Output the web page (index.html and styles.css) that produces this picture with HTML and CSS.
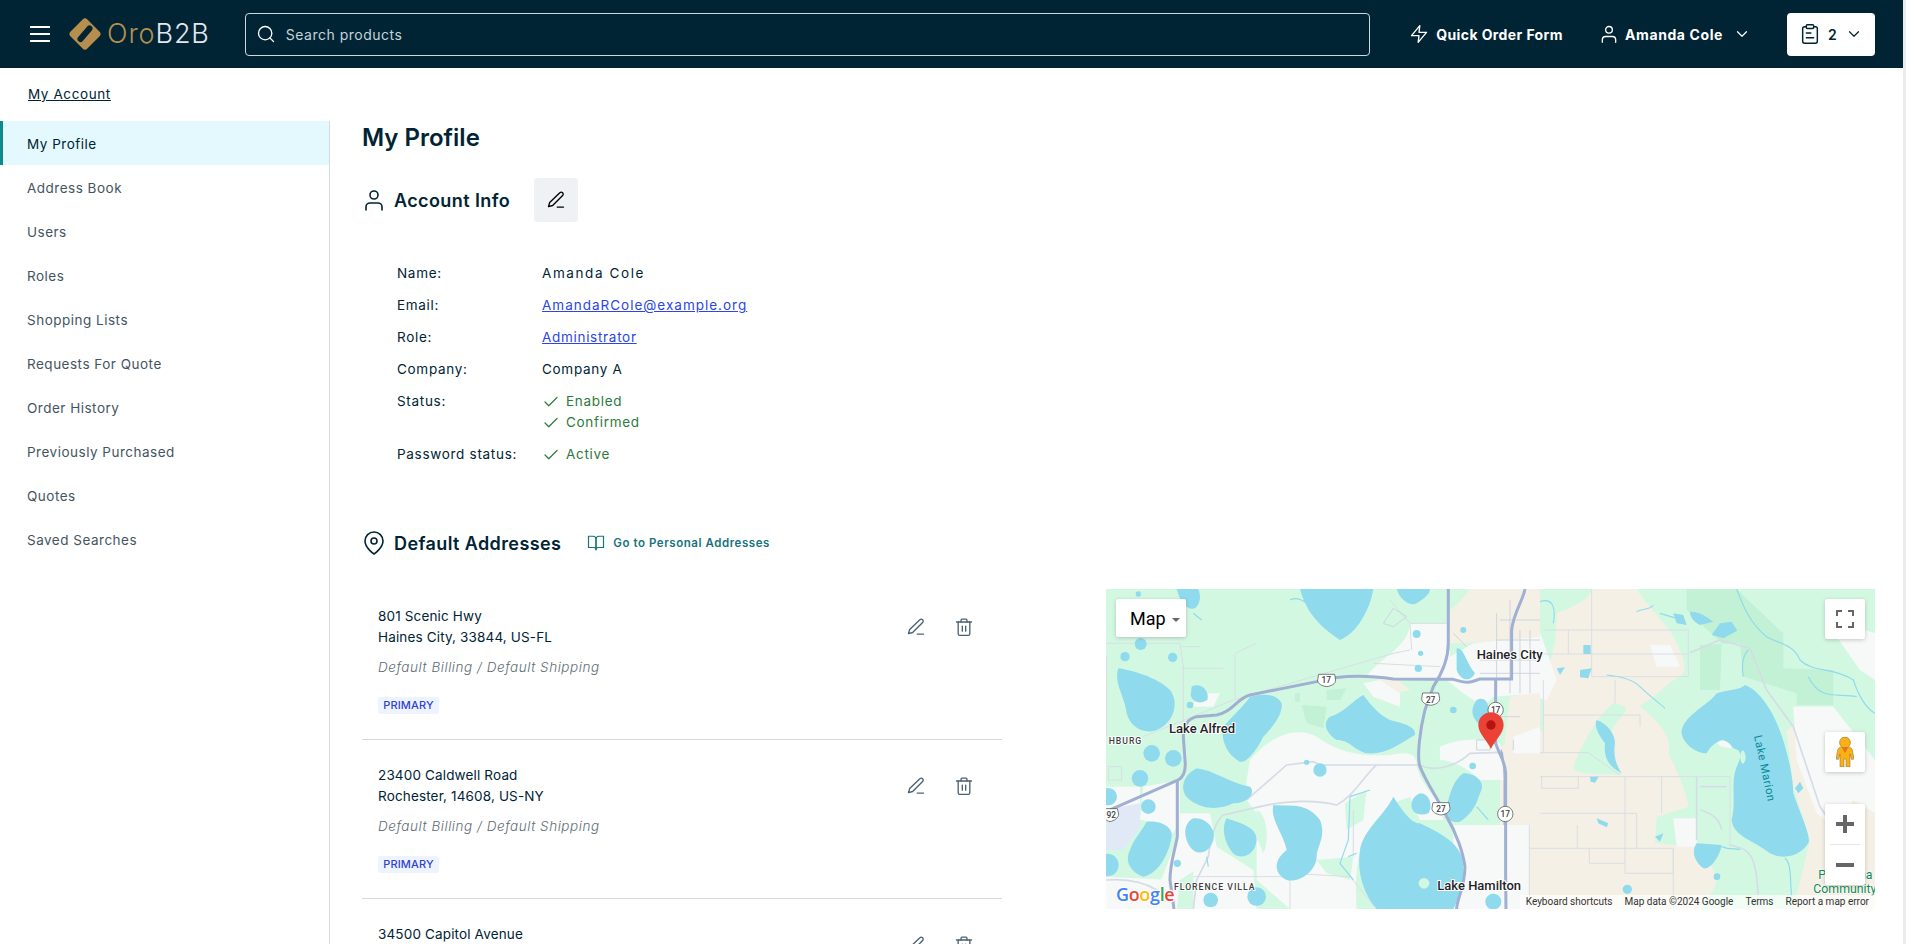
FILE: index.html
```html
<!DOCTYPE html>
<html lang="en">
<head>
  <meta charset="UTF-8">
  <meta name="viewport" content="width=device-width, initial-scale=1.0">
  <title>My Profile</title>
  <link rel="stylesheet" href="styles.css">
</head>
<body>
  <svg class="sprite" width="0" height="0">
    <symbol id="i-user" viewBox="0 0 24 24"><circle cx="12" cy="7" r="4"/><path d="M4 22v-3a4 4 0 0 1 4-4h8a4 4 0 0 1 4 4v3"/></symbol>
    <symbol id="i-edit" viewBox="0 0 24 24"><path d="M16.600 3.400a2.300 2.300 0 0 1 3.300 3.300L8 18.600l-5 1.400 1.400-5z"/><path d="M13.500 20.500H21"/></symbol>
    <symbol id="i-trash" viewBox="0 0 24 24"><path d="M3 6h18"/><path d="M8.500 6V3.500a1 1 0 0 1 1-1h5a1 1 0 0 1 1 1V6"/><path d="M19 6v14a2 2 0 0 1-2 2H7a2 2 0 0 1-2-2V6"/><path d="M10 11v6"/><path d="M14 11v6"/></symbol>
    <symbol id="i-clip" viewBox="0 0 24 24"><path d="M16 4h2a2 2 0 0 1 2 2v14a2 2 0 0 1-2 2H6a2 2 0 0 1-2-2V6a2 2 0 0 1 2-2h2"/><rect x="8" y="2" width="8" height="4" rx="1"/><path d="M8 11h5"/><path d="M8 16h8"/></symbol>
    <symbol id="i-bolt" viewBox="0 0 24 24"><path d="M13 2 3 14h9l-1 8 10-12h-9z"/></symbol>
    <symbol id="i-search" viewBox="0 0 24 24"><circle cx="11" cy="11" r="8"/><path d="M21 21l-4.350-4.350"/></symbol>
    <symbol id="i-check" viewBox="0 0 24 24"><path d="M20 6 9 17l-5-5"/></symbol>
    <symbol id="i-pin" viewBox="0 0 24 24"><path d="M21 10c0 7-9 13-9 13s-9-6-9-13a9 9 0 0 1 18 0z"/><circle cx="12" cy="10" r="3"/></symbol>
    <symbol id="i-book" viewBox="0 0 24 24"><path d="M2 3h6a4 4 0 0 1 4 4v14a3 3 0 0 0-3-3H2z"/><path d="M22 3h-6a4 4 0 0 0-4 4v14a3 3 0 0 1 3-3h7z"/></symbol>
    <symbol id="i-down" viewBox="0 0 24 24"><path d="M6 9l6 6 6-6"/></symbol>
  </svg>

  <div class="page">
    <div class="content">
      <header class="topbar">
        <button class="burger" aria-label="Menu"><span></span><span></span><span></span></button>
        <a class="logo" href="#">
          <svg class="logo-mark" viewBox="0 0 32 32">
            <path class="logo-gold" d="M13.600 1.600a3.300 3.300 0 0 1 4.800 0l12 12a3.300 3.300 0 0 1 0 4.800l-12 12a3.300 3.300 0 0 1-4.800 0l-12-12a3.300 3.300 0 0 1 0-4.800z"/>
            <path class="logo-slot" d="M11.500 21 20.500 10.500"/>
          </svg>
          <span class="logo-text"><span class="logo-oro">Oro</span>B2B</span>
        </a>
        <label class="search">
          <svg class="icon icon-search"><use href="#i-search"/></svg>
          <span class="search-text">Search products</span>
        </label>
        <a class="top-link quick" href="#"><svg class="icon"><use href="#i-bolt"/></svg>Quick Order Form</a>
        <a class="top-link account" href="#"><svg class="icon"><use href="#i-user"/></svg>Amanda Cole<svg class="icon chev"><use href="#i-down"/></svg></a>
        <button class="cart"><svg class="icon"><use href="#i-clip"/></svg><span>2</span><svg class="icon chev"><use href="#i-down"/></svg></button>
      </header>

      <div class="crumbs"><a href="#">My Account</a></div>

      <div class="layout">
        <nav class="sidebar">
          <a class="active" href="#">My Profile</a>
          <a href="#">Address Book</a>
          <a href="#">Users</a>
          <a href="#">Roles</a>
          <a href="#">Shopping Lists</a>
          <a href="#">Requests For Quote</a>
          <a href="#">Order History</a>
          <a href="#">Previously Purchased</a>
          <a href="#">Quotes</a>
          <a href="#">Saved Searches</a>
        </nav>

        <main class="main">
          <h1>My Profile</h1>

          <div class="section-head account-head">
            <svg class="icon head-icon"><use href="#i-user"/></svg>
            <h2>Account Info</h2>
            <button class="edit-btn"><svg class="icon"><use href="#i-edit"/></svg></button>
          </div>

          <dl class="info">
            <dt>Name:</dt><dd class="info-name">Amanda Cole</dd>
            <dt>Email:</dt><dd class="info-email"><a href="#">AmandaRCole@example.org</a></dd>
            <dt>Role:</dt><dd><a href="#">Administrator</a></dd>
            <dt>Company:</dt><dd>Company A</dd>
            <dt>Status:</dt>
            <dd>
              <div class="ok"><svg class="icon"><use href="#i-check"/></svg>Enabled</div>
              <div class="ok"><svg class="icon"><use href="#i-check"/></svg>Confirmed</div>
            </dd>
            <dt>Password status:</dt><dd><div class="ok"><svg class="icon"><use href="#i-check"/></svg>Active</div></dd>
          </dl>

          <div class="section-head address-head">
            <svg class="icon head-icon"><use href="#i-pin"/></svg>
            <h2>Default Addresses</h2>
            <a class="go-link" href="#"><svg class="icon"><use href="#i-book"/></svg>Go to Personal Addresses</a>
          </div>

          <div class="addresses">
            <div class="address-list">
              <div class="address">
                <div>
                  <div>801 Scenic Hwy</div>
                  <div>Haines City, 33844, US-FL</div>
                  <div class="address-type">Default Billing / Default Shipping</div>
                  <span class="badge">PRIMARY</span>
                </div>
                <div class="actions">
                  <button><svg class="icon"><use href="#i-edit"/></svg></button>
                  <button><svg class="icon"><use href="#i-trash"/></svg></button>
                </div>
              </div>
              <div class="address">
                <div>
                  <div>23400 Caldwell Road</div>
                  <div>Rochester, 14608, US-NY</div>
                  <div class="address-type">Default Billing / Default Shipping</div>
                  <span class="badge">PRIMARY</span>
                </div>
                <div class="actions">
                  <button><svg class="icon"><use href="#i-edit"/></svg></button>
                  <button><svg class="icon"><use href="#i-trash"/></svg></button>
                </div>
              </div>
              <div class="address">
                <div>
                  <div>34500 Capitol Avenue</div>
                </div>
                <div class="actions">
                  <button><svg class="icon"><use href="#i-edit"/></svg></button>
                  <button><svg class="icon"><use href="#i-trash"/></svg></button>
                </div>
              </div>
            </div>

            <div class="map">
              <svg class="map-art" viewBox="0 0 769 320">
                <rect width="769" height="320" fill="#d3f8e2"/>

                <!-- east half, traced from the crop -->
                <g transform="translate(394,-9) scale(.3333)">
                  <path class="land-dark" d="M560,27H710L850,160V265L1000,270V375H890V340L730,290L720,190L600,195V330H660L665,190L560,90Z"/>
                  <path class="beige" d="M275,27L410,27C440,80 520,150 530,190C565,260 560,285 520,300C490,320 470,350 418,378C470,420 520,470 505,520C530,570 560,640 565,680L470,710L465,790L580,800C640,840 660,900 640,930L600,987L0,987L0,500L130,450L130,280C170,230 170,130 170,100C220,80 270,60 275,27Z"/>
                  <path class="land" d="M340,370C300,400 250,480 220,560C225,585 260,580 365,585C330,540 320,480 340,440C380,390 400,380 340,370Z"/>
                  <path class="beige" d="M860,450L900,430L1000,600L1125,640V987H880L930,780L880,620Z"/>
                  <path class="white" d="M880,380H1000L1125,540V700L1060,660L1000,740L950,700L890,540Z"/>
                  <path class="white" d="M1010,170L1060,140L1125,160V300L1080,270Z"/>
                  <path class="white" d="M450,195H510L540,260H470Z"/>
                  <path class="white" d="M520,715H590V800H530Z"/>
                  <rect class="white" x="0" y="735" width="88" height="252"/>
                  <path class="white" d="M0,27H100V100L170,300L140,360L60,340L0,300Z"/>
                  <path class="grid" d="M130,150H565V290H275V27M130,222H565M205,150V222M20,590H690V800M125,590V625H235V590M375,590V880M485,590V700M88,520V987M88,700H410V805M88,805H520V880H375M232,735V805M268,805V850H375M520,805V987M0,518H265L360,585M130,405H420V440M345,300V370M130,300V520"/>
                  <path class="grid-road" d="M570,218L660,180L750,205L800,330L880,440L960,680L1000,740M590,590V780M600,620H680M600,690C640,700 660,720 665,750M690,795C740,810 775,800 775,987"/>
                  <path class="water" d="M735,315C780,330 820,400 835,440C860,500 880,590 880,640C900,700 935,770 925,790C900,830 850,840 810,820C760,780 700,770 695,720C710,660 690,610 710,560C730,520 720,510 700,505C680,470 640,480 620,520C580,520 540,480 545,450C560,400 620,380 650,340C680,330 720,330 735,315Z"/>
                  <path class="white" d="M650,490C665,470 690,485 695,505L665,500Z"/>
                  <path class="land" d="M728,510C740,520 740,545 728,552C718,540 718,520 728,510Z"/>
                  <path class="water" d="M290,420C320,430 345,460 345,490C340,520 345,550 365,580C330,560 310,540 315,490C300,470 280,440 290,420Z"/>
                  <path class="water" d="M590,790L665,795C660,830 630,870 610,865C590,850 570,820 590,790Z"/>
                  <path class="water" d="M660,130L695,125L712,152L670,175L635,165Z"/>
                  <path class="water" d="M570,95C600,95 620,110 640,125L600,135C580,125 570,110 570,95Z"/>
                  <path class="water" d="M520,100L550,105L560,135L530,130Z"/>
                  <path class="water" d="M900,605L910,625L895,640L885,625Z"/>
                  <path class="water" d="M250,195H272V222H250Z"/>
                  <path class="water" d="M240,270L275,265L265,295L240,292Z"/>
                  <path class="water" d="M170,265L195,262L180,285Z"/>
                  <circle class="water" cx="651" cy="890" r="10"/>
                  <circle class="water" cx="382" cy="928" r="14"/>
                  <path class="water" d="M290,715L325,730L320,742L295,730Z"/>
                  <path class="water" d="M465,770L490,760L480,785Z"/>
                  <path class="water" d="M270,590L296,590L285,608L272,605Z"/>
                  <path class="stream" d="M120,65C150,55 170,70 160,130M410,95C430,85 450,90 460,75M480,100L530,115M730,290C725,260 725,230 745,210M710,27C730,80 750,130 800,170C830,190 880,190 900,240C940,280 1000,260 1060,300C1080,360 1100,385 1125,400M925,290C960,360 1000,340 1070,350M320,285C370,290 400,300 420,320C450,350 480,370 495,385M855,835C875,850 870,900 875,950M665,800C690,810 700,805 720,808"/>
                  <path class="road-main" d="M75,27C60,60 35,110 35,160L35,297L0,297"/>
                  <path class="road-main" d="M0,510C15,540 15,560 15,600L15,987"/>
                  <text class="lake-label" transform="translate(762,468) rotate(78)">Lake Marion</text>
                  <text class="park-label" x="955" y="898">Poinciana</text>
                  <text class="park-label" x="940" y="940">Community</text>
                </g>

                <!-- west half -->
                <g transform="translate(-6,-9) scale(.3333)">
                  <path class="beige" d="M1050,90C1080,70 1100,40 1110,27L1320,27V180L1050,190Z"/>
                  <path class="beige" d="M1230,350L1320,330V735H1222L1210,520Z"/>
                  <path class="beige" d="M830,300L880,290L930,330L880,340Z"/>
                  <path class="white" d="M930,130L1050,130L1050,230L1120,190L1320,170V340L1180,350L1150,380L1090,340L1040,300L880,300L800,290C830,240 930,200 930,130Z"/>
                  <path class="white" d="M1240,470L1320,440V520L1240,520Z"/>
                  <path class="white" d="M450,540C520,460 590,440 650,470C720,520 790,530 870,525C940,510 950,530 950,560C960,600 1000,650 1010,660C950,640 900,650 860,690C780,750 760,860 770,987L570,987L470,900L470,700L440,660L440,600Z"/>
                  <path class="land-dark" d="M605,375L680,380L670,445L620,430ZM585,340H600V365H585ZM680,330L740,325L720,360L680,360Z"/>
                  <path class="land" d="M470,690C500,700 510,780 490,820L465,760Z"/>
                  <path class="land" d="M650,840L760,830L750,900L680,880Z"/>
                  <path class="land" d="M735,670L800,630L790,720L740,750Z"/>
                  <path class="white" d="M18,620H120V700L18,720Z"/>
                  <path class="white" d="M130,620L240,600V720L220,760C180,730 130,720 120,720Z"/>
                  <path class="white" d="M240,700L330,700L350,800L300,860L240,900L230,987H150L230,780Z"/>
                  <path class="white" d="M18,890L215,900V987H18Z"/>
                  <path class="white" d="M280,850L350,800L460,870L470,987H280Z"/>
                  <path class="white" d="M1060,735H1225V987H1060Z"/>
                  <path class="white" d="M1020,500C1060,480 1130,470 1200,490L1210,600L1140,600C1100,560 1050,540 1020,540Z"/>
                  <path class="white" d="M790,310L840,300L900,340L900,380L820,350Z"/>
                  <path class="white" d="M930,650L1010,650L1030,720L960,720Z"/>
                  <path class="white" d="M290,340L360,340L340,380L280,380Z"/>
                  <path class="lavender" d="M18,690L120,670V740L70,810H18Z"/>
                  <path class="grid" d="M18,190H240L250,260V470M20,230V470M245,265H370M245,200H300M405,220L470,190M405,225V355M870,60L930,130L935,210M930,130H1040M930,210L880,220L400,360L130,470M820,250L1020,260M25,560H65V600H25ZM280,890H570V987M570,880L750,890L830,987M760,690L760,830"/>
                  <path class="grid-road" d="M960,555C1000,575 1060,565 1110,520L1200,517M960,555H660L640,545L560,555L440,660M830,555C790,590 760,650 710,675C650,660 560,660 480,680L370,705C340,730 330,790 325,830L290,900L280,987M18,900C80,895 130,905 170,930L215,945"/>
                  <path class="building" d="M1060,160L1100,200M1140,240L1320,240M1190,100V340M1230,60L1230,340M1260,150V340M1290,150V340M1140,280H1320M1200,120H1320M1190,180H1320"/>
                  <path class="building" d="M850,130L880,85L920,110L880,140ZM1130,480H1170V510H1130ZM1200,410H1260M1240,480V510"/>
                  <path class="water" d="M600,27C620,100 660,140 720,180C770,160 810,90 820,27Z"/>
                  <path class="water" d="M230,27C240,70 270,100 290,80C305,60 300,40 295,27Z"/>
                  <path class="water" d="M890,27C900,60 930,80 950,70C980,50 990,40 990,27Z"/>
                  <path class="water" d="M55,265C90,270 170,290 210,330C240,370 220,430 170,450C130,465 90,440 80,400C75,350 40,310 55,265Z"/>
                  <path class="water" d="M275,320C300,305 330,330 322,360C300,375 275,365 272,345Z"/>
                  <path class="water" d="M450,350C490,340 530,340 545,370C550,400 520,440 490,470C470,510 440,550 420,545C390,530 360,490 370,440C385,420 430,380 450,350Z"/>
                  <path class="water" d="M790,345C810,370 830,400 870,420C910,430 950,440 945,465C900,490 860,525 800,520C760,510 750,480 710,480C680,460 665,430 690,410C730,400 760,360 790,345Z"/>
                  <path class="water" d="M290,565C340,570 390,610 450,620C470,640 440,670 400,670C360,690 310,690 270,660C240,640 240,590 290,565Z"/>
                  <path class="water" d="M140,725C180,720 220,740 215,770C210,810 180,880 130,890C100,880 70,850 90,810C100,780 120,760 140,725Z"/>
                  <path class="water" d="M280,715C320,710 350,750 340,780C330,820 290,830 270,800C250,770 250,730 280,715Z"/>
                  <path class="water" d="M380,715C420,730 470,740 470,780C465,830 420,840 400,820C380,800 360,750 380,715Z"/>
                  <path class="water" d="M520,675C570,680 620,665 660,720C680,770 650,800 650,830C650,870 600,910 560,900C520,880 520,840 560,810C550,760 510,720 520,675Z"/>
                  <path class="water" d="M880,650C900,680 930,730 960,730C1000,750 1070,780 1085,830C1100,880 1080,950 1060,987L830,987C790,940 770,880 780,810C790,750 850,710 880,650Z"/>
                  <path class="water" d="M960,640C990,640 1000,680 985,700C960,710 930,700 935,670C940,650 950,645 960,640Z"/>
                  <path class="water" d="M1090,580C1130,580 1160,610 1140,640C1130,670 1120,700 1080,725C1050,730 1020,710 1040,680C1050,640 1060,600 1090,580Z"/>
                  <path class="water" d="M1070,205C1090,200 1095,240 1125,280C1110,310 1080,300 1070,270Z"/>
                  <path class="water" d="M1130,360C1160,345 1180,380 1150,440C1130,430 1100,400 1130,360Z"/>
                  <circle class="water" cx="155" cy="520" r="25"/>
                  <circle class="water" cx="220" cy="535" r="25"/>
                  <circle class="water" cx="120" cy="595" r="25"/>
                  <circle class="water" cx="660" cy="570" r="20"/>
                  <circle class="water" cx="620" cy="547" r="8"/>
                  <circle class="water" cx="145" cy="680" r="22"/>
                  <circle class="water" cx="1060" cy="390" r="10"/>
                  <circle class="water" cx="1090" cy="150" r="9"/>
                  <circle class="water" cx="950" cy="162" r="12"/>
                  <circle class="water" cx="955" cy="265" r="11"/>
                  <circle class="water" cx="962" cy="220" r="8"/>
                  <circle class="water" cx="1118" cy="558" r="10"/>
                  <circle class="water" cx="25" cy="650" r="26"/>
                  <circle class="water" cx="22" cy="855" r="34"/>
                  <circle class="water" cx="232" cy="850" r="11"/>
                  <circle class="water" cx="332" cy="960" r="22"/>
                  <circle class="water" cx="470" cy="950" r="28"/>
                  <circle class="water" cx="1180" cy="965" r="24"/>
                  <circle class="water" cx="122" cy="192" r="18"/>
                  <circle class="water" cx="218" cy="232" r="14"/>
                  <circle class="water" cx="75" cy="230" r="14"/>
                  <circle class="water" cx="270" cy="375" r="10"/>
                  <circle class="water" cx="115" cy="42" r="8"/>
                  <circle class="land" cx="972" cy="910" r="16"/>
                  <path class="stream" d="M750,650L810,630M750,650L745,780L720,850L760,900M745,830L770,820M280,100L305,120M570,60C590,50 610,60 625,75M320,830L325,860M1130,680L1165,720"/>
                  <path class="road-main" d="M18,695L235,600Q260,585 255,540L250,470Q250,420 290,410L350,405C400,395 410,355 450,345L650,305C720,285 800,285 880,297L1000,298L1060,298C1100,310 1110,310 1140,297L1235,297L1235,150C1240,100 1270,60 1275,27"/>
                  <path class="road-main" d="M232,600V770C225,810 210,850 210,900L222,987"/>
                  <path class="road-main" d="M1045,27V190C1045,240 1020,290 1000,320L975,390C960,450 950,530 960,560C980,610 1010,650 1040,710C1070,760 1090,820 1095,860C1095,920 1070,960 1070,987"/>
                  <path class="road-main" d="M1187,297V490C1200,530 1215,540 1217,580V880L1218,987"/>
                  <path class="shield" d="M656,283H704L707,300C707,312 694,318 680,320C666,318 653,312 653,300Z"/>
                  <text class="shield-text" x="679" y="309">17</text>
                  <path class="shield" d="M968,339H1016L1019,356C1019,368 1006,374 992,376C978,374 965,368 965,356Z"/>
                  <text class="shield-text" x="992" y="369">27</text>
                  <path class="shield" d="M999,668H1047L1050,685C1050,697 1037,703 1023,705C1009,703 996,697 996,685Z"/>
                  <text class="shield-text" x="1023" y="695">27</text>
                  <path class="shield" d="M10,686H52L56,702C56,714 43,722 30,725C18,722 10,714 10,702Z"/>
                  <text class="shield-text" x="34" y="714">92</text>
                  <circle class="shield" cx="1187" cy="390" r="23"/>
                  <text class="shield-text" x="1187" y="399">17</text>
                  <circle class="shield" cx="1216" cy="702" r="23"/>
                  <text class="shield-text" x="1216" y="711">17</text>
                  <text class="map-label" x="1130" y="238">Haines City</text>
                  <text class="map-label" x="207" y="458">Lake Alfred</text>
                  <text class="map-label" x="1012" y="930">Lake Hamilton</text>
                  <text class="map-small" x="26" y="492">HBURG</text>
                  <text class="map-small" x="222" y="930">FLORENCE VILLA</text>
                  <path class="pin" d="M1173,397C1152,397 1135,414 1135,435C1135,462 1165,485 1173,507C1181,485 1211,462 1211,435C1211,414 1194,397 1173,397Z"/>
                  <circle class="pin-dot" cx="1173" cy="435" r="14"/>
                  <text class="google" x="48" y="962"><tspan fill="#4285f4">G</tspan><tspan fill="#ea4335">o</tspan><tspan fill="#fbbc05">o</tspan><tspan fill="#4285f4">g</tspan><tspan fill="#34a853">l</tspan><tspan fill="#ea4335">e</tspan></text>
                </g>
              </svg>

              <button class="map-type">Map<span class="caret"></span></button>
              <button class="map-ctl map-full">
                <svg viewBox="0 0 18 18"><path d="M0 6V0h6v2H2v4zM12 0h6v6h-2V2h-4zM18 12v6h-6v-2h4v-4zM6 18H0v-6h2v4h4z"/></svg>
              </button>
              <button class="map-ctl map-peg">
                <svg viewBox="0 0 18 30">
                  <path class="peg-body" d="M9 0a5.500 5.500 0 0 1 3.500 9.700c2 .5 3.300 1.500 3.800 3.300L18 22l-2.400.5L14 17v13h-4v-8H8v8H4V17l-1.600 5.500L0 22l1.700-9c.5-1.800 1.800-2.800 3.800-3.300A5.500 5.500 0 0 1 9 0z"/>
                  <path class="peg-tie" d="M5.500 10H12.500L9 16z"/>
                </svg>
              </button>
              <div class="map-zoom">
                <button><svg viewBox="0 0 18 18"><path d="M18 7h-7V0H7v7H0v4h7v7h4v-7h7z"/></svg></button>
                <button><svg viewBox="0 0 18 18"><path d="M0 7h18v4H0z"/></svg></button>
              </div>
              <div class="map-foot">
                <span>Keyboard shortcuts</span>
                <span>Map data ©2024 Google</span>
                <span>Terms</span>
                <span>Report a map error</span>
              </div>
            </div>
          </div>
        </main>
      </div>
    </div>
    <div class="scrollbar"></div>
  </div>
</body>
</html>
```

FILE: styles.css
```css
* { box-sizing: border-box; }
html, body { height: 100%; }
body { font-family: Inter, "Noto Sans", sans-serif; font-size: 13.5px; line-height: 21px; color: #002434; background: #fff; margin: 0; overflow: hidden; }
a { color: inherit; text-decoration: none; }
button { font: inherit; border: none; background: none; padding: 0; cursor: pointer; }
h1, h2, dl, dd { margin: 0; }
.sprite { position: absolute; }
.icon { width: 20px; height: 20px; fill: none; stroke: currentColor; stroke-width: 1.6; stroke-linecap: round; stroke-linejoin: round; flex: none; }

.page { display: flex; height: 944px; overflow: hidden; }
.content { flex: 1; min-width: 0; }
.scrollbar { width: 3px; background: #ececec; }

/* top bar */
.topbar { height: 68px; background: #002434; color: #fff; display: flex; align-items: center; padding: 0 28px 0 30px; }
.burger { width: 20px; display: flex; flex-direction: column; gap: 5px; }
.burger span { height: 2px; background: #fff; }
.logo { display: flex; align-items: center; margin-left: 19px; }
.logo-mark { width: 32px; height: 32px; }
.logo-gold { fill: #b68f4e; }
.logo-slot { fill: none; stroke: #002434; stroke-width: 6; stroke-linecap: round; }
.logo-text { font-size: 27px; font-weight: 300; line-height: 32px; margin-left: 6px; color: #e3e9ee; letter-spacing: .9px; }
.logo-oro { color: #b68f4e; }
.search { flex: 1; height: 43px; margin-left: 35px; border: 1px solid #cfd8dc; border-radius: 4px; display: flex; align-items: center; padding-left: 10px; }
.icon-search { color: #fff; }
.search-text { margin-left: 10px; color: #c5d3da; font-size: 14px; letter-spacing: .5px; }
.top-link { display: flex; align-items: center; font-size: 14px; font-weight: 700; white-space: nowrap; letter-spacing: .4px; }
.quick { margin-left: 39px; }
.quick .icon { margin-right: 7px; }
.account { margin-left: 36px; letter-spacing: .6px; }
.account .icon { margin-right: 6px; }
.account .chev { width: 18px; height: 18px; margin: 0 0 0 10px; }
.cart { width: 88px; height: 43px; margin-left: 36px; background: #fff; color: #002434; border-radius: 4px; display: flex; align-items: center; padding-left: 12px; font-size: 14px; font-weight: 600; }
.cart .icon { width: 22px; height: 22px; }
.cart span { margin-left: 7px; }
.cart .chev { width: 18px; height: 18px; margin-left: 8px; }

/* page */
.crumbs { height: 53px; padding: 16px 0 0 28px; font-size: 13.5px; }
.crumbs a { text-decoration: underline; letter-spacing: .6px; }
.layout { display: flex; }
.sidebar { width: 330px; height: 823px; border-right: 1px solid #d5dadd; flex: none; }
.sidebar a { display: block; height: 44px; padding-top: 1px; line-height: 44px; padding-left: 27px; color: #44555f; letter-spacing: .5px; }
.sidebar a.active { color: #002434; background: #e4f9fe; border-left: 3px solid #0b8a92; padding-left: 24px; }
.main { flex: 1; min-width: 0; padding: 0 28px 0 32px; }
h1 { font-size: 24px; font-weight: 600; line-height: 34px; }
h2 { font-size: 18px; font-weight: 600; line-height: 24px; letter-spacing: .4px; padding-top: 1px; }
.section-head { display: flex; align-items: center; }
.head-icon { width: 24px; height: 24px; margin-right: 8px; }
.account-head { margin-top: 23px; height: 44px; }
.edit-btn { width: 44px; height: 44px; margin-left: 24px; background: #eff2f5; border-radius: 4px; display: flex; align-items: center; justify-content: center; }

.info { margin: 41px 0 0 35px; display: grid; grid-template-columns: 145px 1fr; row-gap: 11px; letter-spacing: .7px; }
.info a { color: #2b45e8; text-decoration: underline; }
.info-name { letter-spacing: 1.6px; }
.info-email { letter-spacing: 1px; }
.ok { display: flex; align-items: center; color: #2c7a3c; }
.ok .icon { width: 18px; height: 18px; margin-right: 6px; }

.address-head { margin-top: 62px; height: 32px; }
.go-link { display: flex; align-items: center; margin-left: 26px; color: #17737c; font-size: 11.5px; font-weight: 600; letter-spacing: .55px; }
.go-link .icon { width: 18px; height: 18px; margin-right: 8px; }

.addresses { display: flex; gap: 104px; margin-top: 22px; }
.address-list { width: 640px; flex: none; }
.address { display: flex; justify-content: space-between; padding: 25px 0 24px 16px; border-bottom: 1px solid #d5dadd; letter-spacing: .15px; }
.address-type { margin-top: 9px; color: #5d6c75; font-style: italic; font-weight: 300; letter-spacing: .55px; }
.badge { display: inline-block; width: 61px; height: 17px; margin-top: 19px; background: #eef4ff; color: #2f43d0; border-radius: 2px; font-size: 11px; font-weight: 500; line-height: 17px; text-align: center; }
.actions { display: flex; gap: 4px; margin: -1px 16px 0 0; color: #4a6170; }
.actions button { width: 44px; height: 44px; color: inherit; display: flex; align-items: center; justify-content: center; }

/* map */
.map { position: relative; width: 769px; height: 320px; margin-top: 8px; overflow: hidden; font-family: Roboto, sans-serif; }
.map-art { display: block; width: 769px; height: 320px; }
.beige { fill: #f5f0e5; }
.white { fill: #f7f8f8; }
.land { fill: #d3f8e2; }
.land-dark { fill: #c2f1d5; }
.lavender { fill: #e1e9f7; }
.water { fill: #90daee; }
.grid { fill: none; stroke: #d9dee5; stroke-width: 3; }
.grid-road { fill: none; stroke: #d5dce6; stroke-width: 5; }
.building { fill: none; stroke: #cdd5de; stroke-width: 3; }
.stream { fill: none; stroke: #90daee; stroke-width: 3.5; }
.road-main { fill: none; stroke: #9fb0d2; stroke-width: 9; }
.shield { fill: #fff; stroke: #3c4043; stroke-width: 2; }
.shield-text { font-size: 25px; fill: #3c4043; text-anchor: middle; font-weight: 500; }
.map-label { font-size: 39px; font-weight: 500; fill: #1f2328; stroke: #fff; stroke-width: 6; paint-order: stroke; }
.map-small { font-size: 26px; font-weight: 500; fill: #3c4043; letter-spacing: 3px; stroke: #fff; stroke-width: 5; paint-order: stroke; }
.lake-label { font-size: 34px; fill: #0a8a96; letter-spacing: 1.5px; }
.park-label { font-size: 37px; fill: #118a56; stroke: #fff; stroke-width: 3; paint-order: stroke; }
.pin { fill: #ea4335; }
.pin-dot { fill: #b31412; }
.google { font-family: "Open Sans", sans-serif; font-size: 54px; font-weight: 600; letter-spacing: -1px; stroke: #fff; stroke-width: 7; paint-order: stroke; }
.map-type { position: absolute; left: 10px; top: 10px; width: 70px; height: 38px; background: #fff; border-radius: 2px; box-shadow: 0 1px 4px #0003; font-size: 18px; color: #000; text-align: left; padding-left: 14px; }
.caret { display: inline-block; margin-left: 6px; vertical-align: 3px; border: 4px solid transparent; border-top-color: #666; border-bottom: none; }
.map-ctl { position: absolute; left: 719px; width: 40px; height: 40px; background: #fff; border-radius: 2px; box-shadow: 0 1px 4px #0003; display: flex; align-items: center; justify-content: center; }
.map-ctl svg, .map-zoom svg { width: 18px; height: 18px; fill: #666; }
.map-full { top: 10px; }
.map-peg { top: 143px; }
.map-peg svg { width: 18px; height: 30px; }
.peg-body { fill: #fbb116; stroke: #7a6a3c; stroke-width: .5; }
.peg-tie { fill: #e2771d; }
.map-zoom { position: absolute; left: 719px; top: 215px; width: 40px; height: 81px; background: #fff; border-radius: 2px; box-shadow: 0 1px 4px #0003; }
.map-zoom button { width: 40px; height: 40px; display: flex; align-items: center; justify-content: center; }
.map-zoom button + button { border-top: 1px solid #e6e6e6; height: 41px; margin: 0 5px; width: 30px; }
.map-foot { position: absolute; right: 0; bottom: 0; height: 14px; display: flex; font-size: 10px; line-height: 14px; color: #333; }
.map-foot span { background: #ffffffb3; padding: 0 6px; }
```
